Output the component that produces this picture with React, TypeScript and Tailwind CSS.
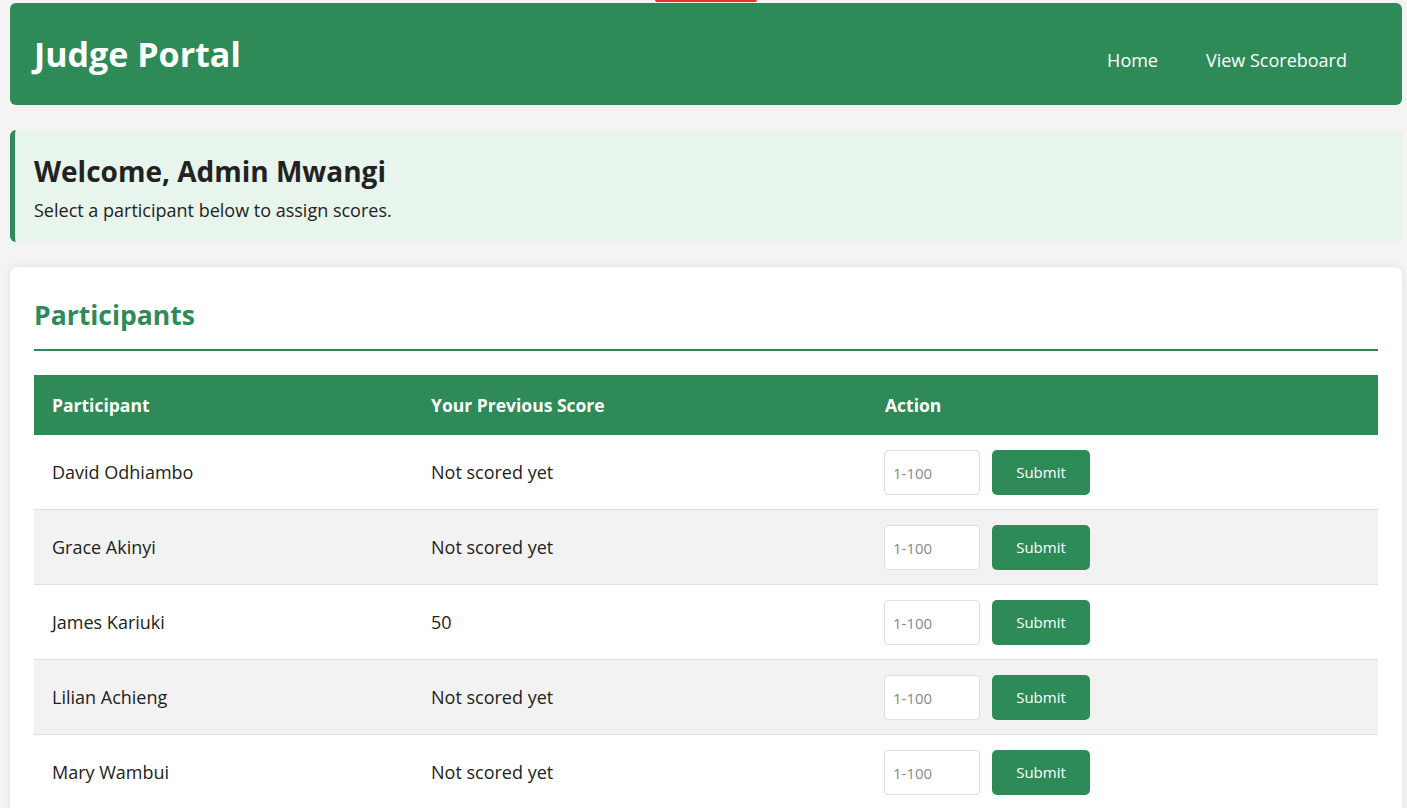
import React from "react";

const participants = [
  { name: "David Odhiambo", score: "Not scored yet" },
  { name: "Grace Akinyi", score: "Not scored yet" },
  { name: "James Kariuki", score: "50" },
  { name: "Lilian Achieng", score: "Not scored yet" },
  { name: "Mary Wambui", score: "Not scored yet" },
];

function Header() {
  return (
    <header className="h-[102px] bg-[#2e8b57] rounded-md flex items-center justify-between pl-6 pr-[55px]">
      <h1 className="text-[34px] leading-[40px] font-bold text-white">Judge Portal</h1>
      <nav className="flex items-center gap-12 pt-3">
        <a href="#" className="text-[18px] text-white">Home</a>
        <a href="#" className="text-[18px] text-white">View Scoreboard</a>
      </nav>
    </header>
  );
}

export default function App() {
  return (
    <div
      className="relative min-h-screen bg-[#f4f4f4] pt-[3px] pl-[10px] pr-[5px] text-[#222]"
      style={{ fontFamily: "'Open Sans', 'Noto Sans', sans-serif" }}
    >
      {/* little red tab at the very top */}
      <div className="absolute top-0 left-[655px] w-[102px] h-[2px] rounded-b bg-[#e2341f]" />

      <Header />

      {/* Welcome banner */}
      <section className="mt-[25px] bg-[#e8f5ec] border-l-[5px] border-[#2e8b57] rounded-md pl-[19px] pt-[25px] pb-[20px]">
        <h2 className="text-[28px] leading-[32px] font-bold text-[#222]">Welcome, Admin Mwangi</h2>
        <p className="mt-[11px] text-[18px] leading-[24px] text-[#222]">
          Select a participant below to assign scores.
        </p>
      </section>

      {/* Participants card */}
      <section className="mt-[25px] bg-white rounded-lg shadow-[0_0_10px_rgba(0,0,0,0.08)] px-6 pt-[31px] pb-8">
        <h2 className="text-[26.5px] leading-[34px] font-bold text-[#2e8b57] pb-[17px] border-b-2 border-[#2e8b57]">
          Participants
        </h2>

        <table className="mt-6 w-full table-fixed border-collapse">
          <colgroup>
            <col className="w-[379px]" />
            <col className="w-[454px]" />
            <col />
          </colgroup>
          <thead>
            <tr className="bg-[#2e8b57] text-white">
              <th className="h-[60px] px-[18px] text-left text-[17.5px] font-bold">Participant</th>
              <th className="h-[60px] px-[18px] text-left text-[17.5px] font-bold">Your Previous Score</th>
              <th className="h-[60px] px-[18px] text-left text-[17.5px] font-bold">Action</th>
            </tr>
          </thead>
          <tbody>
            {participants.map((p, i) => (
              <tr key={p.name} className={i % 2 === 1 ? "bg-[#f2f2f2]" : "bg-white"}>
                <td className="px-[18px] pt-[15px] pb-[14px] border-b border-[#ddd] text-[18px]">{p.name}</td>
                <td className="px-[18px] pt-[15px] pb-[14px] border-b border-[#ddd] text-[18px]">{p.score}</td>
                <td className="px-[17px] pt-[15px] pb-[14px] border-b border-[#ddd]">
                  <div className="flex items-center gap-3">
                    <input
                      type="number"
                      placeholder="1-100"
                      className="w-[96px] h-[45px] px-2 bg-white border border-[#ddd] rounded text-[15px] placeholder:text-[#888] outline-none"
                    />
                    <button className="w-[98px] h-[45px] bg-[#2e8b57] text-white text-[15px] rounded-[5px]">
                      Submit
                    </button>
                  </div>
                </td>
              </tr>
            ))}
          </tbody>
        </table>
      </section>
    </div>
  );
}
